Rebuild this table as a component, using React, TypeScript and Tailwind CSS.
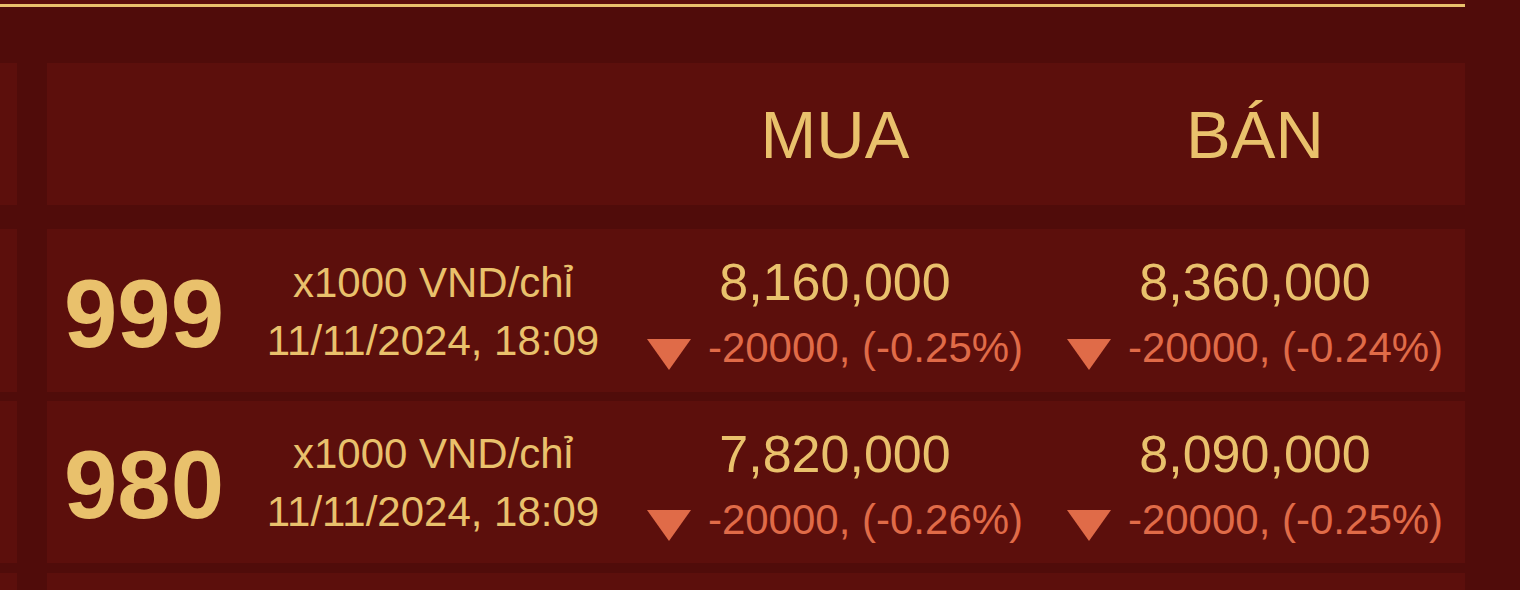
import React from 'react';

interface PriceRow {
    code: string;
    unit: string;
    time: string;
    buy: string;
    buyChange: string;
    sell: string;
    sellChange: string;
}

const rows: PriceRow[] = [
    {
        code: '999',
        unit: 'x1000 VND/chỉ',
        time: '11/11/2024, 18:09',
        buy: '8,160,000',
        buyChange: '-20000, (-0.25%)',
        sell: '8,360,000',
        sellChange: '-20000, (-0.24%)',
    },
    {
        code: '980',
        unit: 'x1000 VND/chỉ',
        time: '11/11/2024, 18:09',
        buy: '7,820,000',
        buyChange: '-20000, (-0.26%)',
        sell: '8,090,000',
        sellChange: '-20000, (-0.25%)',
    },
];

const DownArrow = () => (
    <svg width="44" height="31" viewBox="0 0 44 31" className="shrink-0 translate-y-[6px] blur-[0.4px]">
        <polygon points="0,0 44,0 22,31" fill="#e06b48" />
    </svg>
);

const PriceCell: React.FC<{ price: string; change: string }> = ({ price, change }) => (
    <div className="w-[420px] flex flex-col items-center justify-center pt-[4px]">
        <div className="text-[52px] leading-[60px] text-[#e9c16c]">{price}</div>
        <div className="mt-[11px] flex items-center gap-[17px]">
            <DownArrow />
            <span className="text-[42px] leading-[50px] text-[#e06b48]">{change}</span>
        </div>
    </div>
);

export default function App() {
    return (
        <div
            className="h-[590px] w-[1520px] overflow-hidden bg-[#500c0a]"
            style={{ fontFamily: '"Liberation Sans", Arial, sans-serif' }}
        >
            {/* top edge of the section above */}
            <div className="w-[1465px]">
                <div className="h-[4px] bg-[#5c0f0c]" />
                <div className="h-[3px] bg-[#e9c16c]" />
            </div>

            {/* header */}
            <div className="mt-[56px] flex gap-[30px]">
                <div className="w-[17px] h-[142px] bg-[#5c0f0c]" />
                <div className="w-[1418px] h-[142px] bg-[#5c0f0c] flex items-center text-[#e9c16c] text-[67px] leading-none">
                    <div className="w-[578px]" />
                    <div className="w-[420px] text-center">MUA</div>
                    <div className="w-[420px] text-center">BÁN</div>
                </div>
            </div>

            {/* rows */}
            <div className="mt-[24px] flex flex-col">
                {rows.map((r, i) => (
                    <div key={r.code} className={`flex gap-[30px] ${i === 0 ? 'h-[163px] mb-[9px]' : 'h-[162px] mb-[10px]'}`}>
                        <div className="w-[17px] bg-[#5c0f0c]" />
                        <div className="w-[1418px] bg-[#5c0f0c] flex">
                            <div className="w-[194px] flex items-center justify-center pt-[6px]">
                                <span className="text-[96px] leading-[96px] font-bold text-[#e9c16c]">{r.code}</span>
                            </div>
                            <div className="w-[384px] flex flex-col items-center justify-center pt-[2px] text-[42px] leading-[58px] text-[#e9c16c]">
                                <div>{r.unit}</div>
                                <div>{r.time}</div>
                            </div>
                            <PriceCell price={r.buy} change={r.buyChange} />
                            <PriceCell price={r.sell} change={r.sellChange} />
                        </div>
                    </div>
                ))}
                <div className="flex gap-[30px] h-[162px]">
                    <div className="w-[17px] bg-[#5c0f0c]" />
                    <div className="w-[1418px] bg-[#5c0f0c]" />
                </div>
            </div>
        </div>
    );
}
